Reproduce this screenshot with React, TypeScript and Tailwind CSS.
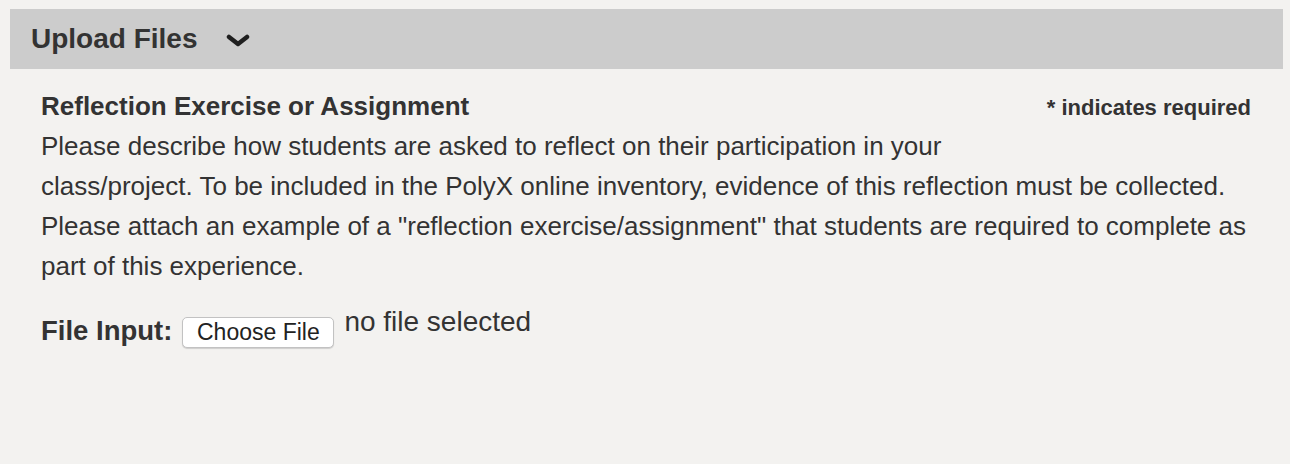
export default function App() {
  return (
    <div
      className="min-h-[464px] w-full bg-[#f3f2f0] pt-[9px] pl-[10px] pr-[7px] text-[#333333]"
      style={{ fontFamily: '"Liberation Sans", Arial, sans-serif' }}
    >
      <div className="flex h-[60px] items-center bg-[#cccccc] pl-[21px]">
        <h1 className="text-[28px] font-bold leading-none">Upload Files</h1>
        <svg
          className="ml-[29px] mt-[2px]"
          width="24"
          height="13"
          viewBox="0 0 24 13"
          fill="none"
        >
          <path
            d="M3 3 L12 10 L21 3"
            stroke="#1f1f1f"
            strokeWidth="4.5"
            strokeLinecap="round"
            strokeLinejoin="round"
          />
        </svg>
      </div>

      <div className="pl-[31px] pr-[32px]">
        <div className="mt-[17px] flex items-baseline justify-between">
          <h2 className="text-[26px] font-bold leading-[40px]">
            Reflection Exercise or Assignment
          </h2>
          <span className="text-[22px] font-bold">* indicates required</span>
        </div>

        <p className="text-[26px] leading-[40px]">
          Please describe how students are asked to reflect on their
          participation in your
          <br />
          class/project. To be included in the PolyX online inventory, evidence
          of this reflection must be collected. Please attach an example of a
          "reflection exercise/assignment" that students are required to
          complete as part of this experience.
        </p>

        <div className="mt-[25px] flex items-start">
          <label className="text-[27.5px] font-bold leading-[40px]">
            File Input:
          </label>
          <button
            type="button"
            className="ml-[10px] mt-[6px] flex h-[31px] w-[152px] items-center justify-center rounded-[5px] border border-[#c2c2c2] bg-white text-[23px] leading-none text-[#222222] shadow-[0_1px_1px_rgba(0,0,0,0.15)]"
          >
            Choose File
          </button>
          <span className="ml-[10px] -mt-[9px] text-[28px] leading-[40px]">
            no file selected
          </span>
        </div>
      </div>
    </div>
  );
}
